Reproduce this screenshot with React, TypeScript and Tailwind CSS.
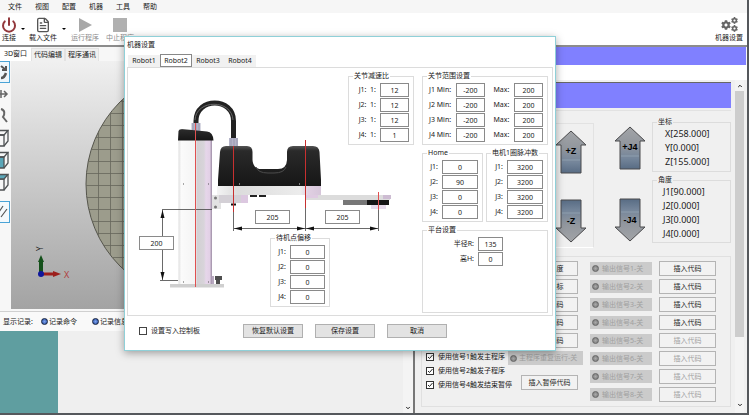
import type { ReactNode } from "react";
import { ChevronDown, ChevronUp, FileText, Power } from "lucide-react";
import { FaCog } from "react-icons/fa";

const menus = ["文件", "视图", "配置", "机器", "工具", "帮助"];
const joints = ["J1", "J2", "J3", "J4"];
const robots = ["Robot1", "Robot2", "Robot3", "Robot4"];
const captures = ["插入角度", "插入坐标", "插入代码", "插入代码", "插入代码"];
const triggers = [
  "使用信号1触发主程序",
  "使用信号2触发子程序",
  "使用信号4触发结束暂停",
];

function Group({
  title,
  className = "",
  children,
}: {
  title: string;
  className?: string;
  children?: ReactNode;
}) {
  return (
    <fieldset className={`border border-[#dcdcdc] min-w-0 ${className}`}>
      <legend className="ml-1 px-px leading-[10px]">{title}</legend>
      {children}
    </fieldset>
  );
}

function NumberBox({
  label,
  value,
  className,
}: {
  label: string;
  value: string;
  className: string;
}) {
  return (
    <input
      aria-label={label}
      defaultValue={value}
      className={`h-[14px] border border-[#8a8a8a] bg-white text-center leading-3 ${className}`}
    />
  );
}

function JointRows({
  name,
  prefix = "",
  values,
  box,
}: {
  name: string;
  prefix?: string;
  values: string[];
  box: string;
}) {
  return (
    <div className="flex flex-col gap-px pt-0.5 pb-0.5 pr-1">
      {joints.map((joint, i) => (
        <label key={joint} className="flex items-center justify-end gap-1">
          <span className="whitespace-pre">
            {joint}:{prefix}
          </span>
          <NumberBox label={`${name} ${joint}`} value={values[i]} className={box} />
        </label>
      ))}
    </div>
  );
}

function ToolButton({
  label,
  icon,
  disabled = false,
  className = "",
}: {
  label: string;
  icon: ReactNode;
  disabled?: boolean;
  className?: string;
}) {
  return (
    <button
      disabled={disabled}
      className={`flex flex-col items-center whitespace-nowrap leading-[10px] disabled:text-[#8c8c8c] ${className}`}
    >
      <span className="flex h-[17px] items-center">{icon}</span>
      {label}
    </button>
  );
}

function Caret() {
  return (
    <span className="block h-0 w-0 border-x-2 border-t-2 border-x-transparent border-t-black" />
  );
}

function JogArrow({ label, down = false }: { label: string; down?: boolean }) {
  return (
    <button aria-label={label} className="block">
      <svg width="32" height="44" viewBox="0 0 32 44">
        <defs>
          <linearGradient id={down ? "jogDown" : "jogUp"} x1="0" y1={down ? "1" : "0"} x2="0" y2={down ? "0" : "1"}>
            <stop offset="0" stopColor="#a2a4a7" />
            <stop offset="0.4" stopColor="#92979e" />
            <stop offset="0.75" stopColor="#74859a" />
            <stop offset="1" stopColor="#586c84" />
          </linearGradient>
        </defs>
        <path
          d={down ? "M6 1H26V29H31L16 43L1 29H6Z" : "M16 1L31 15H26V43H6V15H1Z"}
          fill={down ? "url(#jogDown)" : "url(#jogUp)"}
          stroke="#4a4a4c"
        />
        <path d={down ? "M7 14H25" : "M7 30H25"} stroke="#9aa9b8" strokeWidth="0.7" />
        <text
          x="16"
          y={down ? "25" : "24"}
          textAnchor="middle"
          className="font-['Liberation_Sans',sans-serif] text-[9px] font-bold"
        >
          {label}
        </text>
      </svg>
    </button>
  );
}

function Cube({ front = "none", top = "none" }: { front?: string; top?: string }) {
  return (
    <svg width="14" height="18" viewBox="0 0 14 18" fill="none" stroke="#4f5254" strokeWidth="1.3">
      <path d="M1 6H9V17H1Z" fill={front} />
      <path d="M1 6L5 1.500H13L9 6Z" fill={top} />
      <path d="M13 1.500V12L9 17" />
    </svg>
  );
}

function ViewTools() {
  const item = "flex h-[22px] w-4 items-center justify-center";
  return (
    <div className="w-[11px] shrink-0 overflow-hidden bg-[#f7f7f7]">
      <div className="-ml-1.5 flex flex-col">
        <button aria-label="旋转" className={`${item} border border-[#4aa3d6] bg-[#eef6fb]`}>
          <svg width="14" height="18" viewBox="0 0 14 18" fill="none" stroke="#555">
            <path d="M6 3L11 7M11 3V7H7" strokeWidth="2" />
            <path d="M6 15C9 15 10 13 11 10" strokeWidth="2.500" />
          </svg>
        </button>
        <button aria-label="平移" className={item}>
          <svg width="14" height="14" viewBox="0 0 14 14" fill="none" stroke="#666" strokeWidth="1.500">
            <path d="M5 7H12M9 4L12 7L9 10M6 3V11" />
          </svg>
        </button>
        <button aria-label="缩放" className={item}>
          <svg width="14" height="16" viewBox="0 0 14 16" fill="none" stroke="#666" strokeWidth="2">
            <path d="M6 1C10 2 10 6 8 9L12 14" />
          </svg>
        </button>
        <button aria-label="前视图" className={item}>
          <Cube />
        </button>
        <button aria-label="左视图" className={item}>
          <Cube front="#5aa6b8" />
        </button>
        <button aria-label="俯视图" className={item}>
          <Cube top="#5aa6b8" />
        </button>
        <button aria-label="测量" className={`${item} mt-2 border border-[#4aa3d6] bg-[#f4f9fc]`}>
          <svg width="14" height="18" viewBox="0 0 14 18" fill="none" stroke="#555" strokeWidth="1.200">
            <path d="M4 9L8 3M6 14L12 6" />
          </svg>
        </button>
      </div>
    </div>
  );
}

function Viewport() {
  const columns = [98, 110, 122, 134, 146, 158, 170, 182, 194, 206, 218, 230];
  const rows = [77, 89, 101, 113, 125, 137, 149, 161, 173, 185, 197, 209, 221, 233, 245, 257, 269, 281, 293];
  return (
    <div className="min-w-0 flex-1 overflow-hidden bg-linear-to-b from-[#f0f0f0] to-[#a3a3a3]">
      <svg width="392" height="248" viewBox="11 61 392 248">
        <defs>
          <clipPath id="plate">
            <circle cx="202" cy="184" r="116" />
          </clipPath>
        </defs>
        <circle cx="202" cy="184" r="116" fill="#9c9c8c" stroke="#55554c" />
        <g clipPath="url(#plate)" stroke="#66665c" strokeWidth="0.8">
          {columns.map((x) => (
            <path key={x} d={`M${x}.5 61V309`} />
          ))}
          {rows.map((y) => (
            <path key={y} d={`M80 ${y}.5H330`} />
          ))}
        </g>
        <path d="M41 273V261" stroke="#14501a" strokeWidth="4" />
        <path d="M38 262L41 255L44 262Z" fill="#14501a" />
        <path d="M43 274H54" stroke="#9c1f1c" strokeWidth="3" />
        <path d="M53 271L61 274L53 277Z" fill="#9c1f1c" />
        <circle cx="41" cy="274" r="3" fill="#10189c" />
        <text x="64" y="278" fill="#b04040" className="text-[9px]">
          X
        </text>
        <text transform="translate(43 251) rotate(-90)" fill="#222" className="text-[8px]">
          Y
        </text>
      </svg>
    </div>
  );
}

function RobotDrawing() {
  return (
    <svg className="absolute inset-0" width="290" height="247" viewBox="128 68 290 247" fill="none">
      <defs>
        <linearGradient id="column" x1="0" x2="1" y1="0" y2="0">
          <stop offset="0" stopColor="#dedede" />
          <stop offset="0.08" stopColor="#fbfbfb" />
          <stop offset="0.5" stopColor="#f4f4f4" />
          <stop offset="0.56" stopColor="#d2d0d3" />
          <stop offset="0.76" stopColor="#d8d4da" />
          <stop offset="0.82" stopColor="#e6d6ea" />
          <stop offset="0.93" stopColor="#e2d0e6" />
          <stop offset="1" stopColor="#9c8ca4" />
        </linearGradient>
        <linearGradient id="band" x1="0" x2="1" y1="0" y2="0">
          <stop offset="0" stopColor="#f4f4f4" />
          <stop offset="0.2" stopColor="#dcdcdc" />
          <stop offset="0.8" stopColor="#ececec" />
          <stop offset="0.88" stopColor="#e0cfe2" />
          <stop offset="1" stopColor="#d6c6da" />
        </linearGradient>
        <linearGradient id="cover" x1="0" x2="0" y1="0" y2="1">
          <stop offset="0" stopColor="#555" />
          <stop offset="0.12" stopColor="#2a2a2a" />
          <stop offset="1" stopColor="#161616" />
        </linearGradient>
      </defs>

      {/* hose */}
      <path d="M196 125V121C196 97 233.500 97 233.500 121V140" stroke="#222" strokeWidth="5" />
      <path d="M195 120C196 99 232 99 233 120" stroke="#666" strokeWidth="1" />
      <path d="M191.500 123H200.500V131H191.500ZM229 138H238V146H229Z" fill="#b4b4c8" />
      <path d="M193 123V131M196 123V131M199 123V131M231 138V146M234 138V146M237 138V146" stroke="#8a8aa6" strokeWidth="0.6" />

      {/* column and base */}
      <path d="M178.500 140V284H212V140Z" fill="url(#column)" />
      <path d="M178 140.500L178.500 131Q179 129 182 129L207 131.500Q213 132 213.500 140.500Z" fill="url(#cover)" />
      <path d="M212 276H214V284H212Z" fill="#b8a8c0" />
      <path d="M215 276H222V280H220V284H216V280H215Z" fill="#4e4e4e" />
      <path d="M170 284H224V287.500H170Z" fill="#cfcfcf" />
      <path d="M183 184H184M208 184H209M183 282H184M208 282H209" stroke="#555" />

      {/* arm */}
      <path d="M212 195H221V209H212Z" fill="#e2e2e2" />
      <circle cx="215.500" cy="198" r="1.500" fill="#777" />
      <circle cx="215.500" cy="207" r="1.500" fill="#777" />
      <path d="M219 195H248V203H219Z" fill="#d4d0d6" />
      <path d="M241 195H248V203H241Z" fill="#dcc8e0" />
      <path d="M217 186H321V195H217Z" fill="url(#band)" />
      <path d="M305 195H390V200H305Z" fill="#dcdcdc" />
      <path d="M305 195H318V198H305Z" fill="#dfcbe2" />
      <path d="M383 195H391V199H383Z" fill="#cdbcd2" />
      <path d="M343 200H368V205H343Z" fill="#777" />
      <path d="M367 200H389V205H367Z" fill="#161616" />
      <path d="M371 205H386V209H371Z" fill="#e8dcec" />
      <path d="M250 196H257M259 196H266" stroke="#222" strokeWidth="2" />
      <path d="M231 204.500H236" stroke="#111" strokeWidth="2" />
      <path
        d="M218 186V180L220 152Q220.500 146 226 146H247Q252.500 146 252.500 152V160Q253 169 262 169H278Q286.500 169 287 160V152Q287 146 293 146H313Q319 146 319.500 152L321 180V186Z"
        fill="url(#cover)"
      />
      <path d="M256 167Q258 173 268 173H274Q284 173 286 167" stroke="#4c4c4c" />
      <path d="M239 184H240M299 184H300" stroke="#ddd" />

      {/* dimensions */}
      <g stroke="#444" strokeWidth="0.8">
        <path d="M162 209.500H212M160 280.500H178M162.500 210V280" />
        <path d="M233.500 212V231M305.500 208V231M378.500 208V231M234 228.500H378" />
      </g>
      <path
        d="M162.500 210L160.500 218H164.500ZM162.500 280L160.500 272H164.500ZM234 228.500L242 226.500V230.500ZM305 228.500L297 226.500V230.500ZM306 228.500L314 226.500V230.500ZM378 228.500L370 226.500V230.500Z"
        fill="#111"
      />

      {/* joint axes */}
      <path d="M195.500 123V287" stroke="#e05050" />
      <path d="M233.500 146V212" stroke="#c83030" />
      <path d="M305.500 140V208" stroke="#c83030" />
      <path d="M378.500 192V210" stroke="#e05050" />
    </svg>
  );
}

function SettingsDialog() {
  const button = "h-[14px] w-[60px] border border-[#b0b0b0] bg-[#e3e3e3] leading-3";
  return (
    <div
      role="dialog"
      aria-label="机器设置"
      className="absolute top-9 left-[124px] flex w-[432px] flex-col border border-[#8fd0d8] bg-white px-0.5 shadow-[0_2px_8px_rgba(0,0,0,0.35)]"
    >
      <h2 className="h-[17px] leading-[15px]">机器设置</h2>
      <div role="tablist" className="flex h-[13px] items-end px-px">
        {robots.map((robot) => (
          <button
            key={robot}
            role="tab"
            aria-selected={robot === "Robot2"}
            className="h-3 w-8 bg-[#f1f1f1] leading-3 aria-selected:h-[13px] aria-selected:border aria-selected:border-[#888] aria-selected:bg-white"
          >
            {robot}
          </button>
        ))}
      </div>

      <div className="flex justify-between border border-[#dcdcdc] pr-1">
        <div className="relative flex w-[290px] flex-col items-end justify-between pt-[3px] pr-1 pb-2">
          <RobotDrawing />
          <Group title="关节减速比" className="relative w-[66px]">
            <JointRows name="减速比" prefix="  1:" values={["12", "12", "12", "1"]} box="w-[29px]" />
          </Group>
          <Group title="待机点偏移" className="relative mr-[84px] w-[60px]">
            <JointRows name="待机点偏移" values={["0", "0", "0", "0"]} box="w-[35px]" />
          </Group>
          <NumberBox label="立柱高度" value="200" className="absolute top-[168px] left-[11px] w-[35px]" />
          <NumberBox label="大臂长度" value="205" className="absolute top-[142px] left-[127px] w-[35px]" />
          <NumberBox label="小臂长度" value="205" className="absolute top-[142px] left-[197px] w-[35px]" />
        </div>

        <div className="flex w-[126px] flex-col gap-[3px] pt-[3px] pb-0.5">
          <Group title="关节范围设置">
            <div className="flex flex-col gap-px pt-0.5 pr-1 pb-0.5 pl-1.5">
              {joints.map((joint) => (
                <div key={joint} className="flex items-center justify-between">
                  <span>{joint} Min:</span>
                  <NumberBox label={`${joint} Min`} value="-200" className="w-[29px]" />
                  <span className="pl-1">Max:</span>
                  <NumberBox label={`${joint} Max`} value="200" className="w-[29px]" />
                </div>
              ))}
            </div>
          </Group>
          <div className="flex justify-between">
            <Group title="Home" className="w-[61px]">
              <JointRows name="Home" values={["0", "90", "0", "0"]} box="w-9" />
            </Group>
            <Group title="电机1圈脉冲数" className="w-[62px]">
              <JointRows name="脉冲数" values={["3200", "3200", "3200", "3200"]} box="w-9" />
            </Group>
          </div>
          <Group title="平台设置" className="min-h-[88px]">
            <div className="flex flex-col gap-px pt-0.5 pr-11">
              <label className="flex items-center justify-end gap-1">
                半径R:
                <NumberBox label="半径R" value="135" className="w-[25px]" />
              </label>
              <label className="flex items-center justify-end gap-1">
                高H:
                <NumberBox label="高H" value="0" className="w-[25px]" />
              </label>
            </div>
          </Group>
        </div>
      </div>

      <div className="flex h-[34px] items-center pb-1 pl-3">
        <label className="flex w-[104px] items-center gap-1">
          <input type="checkbox" className="h-2 w-2 appearance-none border border-[#444] bg-white" />
          设置写入控制板
        </label>
        <div className="flex gap-3">
          <button className={button}>恢复默认设置</button>
          <button className={button}>保存设置</button>
          <button className={button}>取消</button>
        </div>
      </div>
    </div>
  );
}

function Lamp() {
  return (
    <span className="h-[7px] w-[7px] shrink-0 rounded-full border border-[#666] bg-radial from-[#aaa] to-[#777]" />
  );
}

function LogOption({ label }: { label: string }) {
  return (
    <button className="flex items-center gap-px">
      <span className="h-[7px] w-[7px] rounded-full border border-[#14203c] bg-radial from-[#7fa4ee] to-[#2348a0]" />
      {label}
    </button>
  );
}

function LeftPane() {
  return (
    <div className="flex min-w-0 flex-col border-r-2 border-[#777]">
      <div role="tablist" className="flex h-3.5 shrink-0 items-end bg-[#f7f7f7] leading-3">
        <button role="tab" aria-selected="true" className="h-3.5 w-[31px] bg-white text-center">
          3D窗口
        </button>
        <button role="tab" aria-selected="false" className="w-[34px] border border-b-0 border-[#e2e2e2] bg-[#f0f0f0] text-center">
          代码编辑
        </button>
        <button role="tab" aria-selected="false" className="w-[34px] border border-b-0 border-[#e2e2e2] bg-[#f0f0f0] text-center">
          程序通讯
        </button>
      </div>
      <div className="flex h-[248px] shrink-0">
        <ViewTools />
        <Viewport />
      </div>
      <div className="mt-0.5 flex h-5 shrink-0 items-center border-t border-[#d0d0d0] bg-[#f9f9f9] pl-[3px]">
        <span className="w-[38px]">显示记录:</span>
        <span className="w-[51px]">
          <LogOption label="记录命令" />
        </span>
        <LogOption label="记录信息" />
      </div>
      <div className="flex min-h-0 flex-1 bg-[#efefef]">
        <div className="w-[58px] bg-[#5f9ea0]" />
        <div className="ml-auto flex w-2.5 items-end justify-center bg-[#f4f4f4] pb-0.5">
          <ChevronDown size={6} strokeWidth={4} />
        </div>
      </div>
    </div>
  );
}

function SignalPanel() {
  const button = "h-[15px] w-[57px] border border-[#b4b4b4] bg-[#f2f2f2] leading-3 disabled:text-[#a0a0a0]";
  return (
    <div className="flex justify-end gap-[7px] border border-[#e0e0e0] py-1 pr-3.5">
      <div className="flex flex-1 flex-col gap-[3px] pl-1">
        {captures.map((label, i) => (
          <button key={i} className={`${button} ml-auto mr-[5px]`}>
            {label}
          </button>
        ))}
        <div className="flex items-start justify-between">
          <div className="flex flex-col gap-1 whitespace-nowrap pt-px">
            {triggers.map((label) => (
              <label key={label} className="flex h-2.5 items-center gap-1">
                <input
                  type="checkbox"
                  defaultChecked
                  className="h-2 w-2 appearance-none border border-[#333] bg-white"
                />
                <svg className="-ml-3 h-2 w-2" viewBox="0 0 8 8" fill="none" stroke="#222">
                  <path d="M2 4L3.500 5.500L6.500 2" />
                </svg>
                {label}
              </label>
            ))}
          </div>
          <div className="-ml-4 flex flex-col items-end gap-2.5">
            <button disabled className="flex h-[14px] w-[75px] items-center gap-0.5 whitespace-nowrap bg-[#cbcbcb] pl-0.5 text-[#a0a0a0]">
              <Lamp />
              主程序重复运行-关
            </button>
            <button className={`${button} mr-[5px]`}>插入暂停代码</button>
          </div>
        </div>
      </div>
      <div className="flex flex-col gap-[3px]">
        {[1, 2, 3, 4, 5, 6, 7, 8].map((n) => (
          <div key={n} className="flex gap-[7px]">
            <button disabled className="flex h-[15px] w-[62px] items-center gap-[3px] whitespace-nowrap border-y border-[#f0f0f0] bg-[#cbcbcb] pl-0.5 text-[#a0a0a0]">
              <Lamp />
              输出信号{n}-关
            </button>
            <button disabled={n > 4} className={button}>
              插入代码
            </button>
          </div>
        ))}
      </div>
    </div>
  );
}

function RightPane() {
  return (
    <div className="flex min-w-0 flex-col">
      <div className="mr-px h-[18px] shrink-0 bg-[#8080ff]" />
      <div className="h-[15px] shrink-0 bg-white" />
      <div className="flex min-h-0 flex-1 bg-[#f0f0f0]">
        <div className="flex min-w-0 flex-1 flex-col pt-0.5 pl-1.5">
          <div className="mr-1 h-[26px] shrink-0 border-t border-[#666] bg-[#8080ff]" />
          <div className="mt-0.5 mr-1 flex flex-col gap-2 border-t border-[#e2e2e2] pt-1.5">
            <div className="flex justify-end gap-5">
              <div className="mt-1.5 flex flex-1 flex-col items-end justify-between border border-[#e2e2e2] border-b-white pt-1.5 pr-1.5 pb-1">
                <JogArrow label="+Z" />
                <JogArrow label="-Z" down />
              </div>
              <div className="flex flex-col justify-between pt-[9px] pb-1.5">
                <JogArrow label="+J4" />
                <JogArrow label="-J4" down />
              </div>
              <div className="-ml-3.5 flex w-[79px] flex-col gap-[3px] pb-[5px]">
                <Group title="坐标">
                  <div className="flex flex-col pb-0.5 pl-3 text-[9px] leading-[14px]">
                    <span>X[258.000]</span>
                    <span>Y[0.000]</span>
                    <span>Z[155.000]</span>
                  </div>
                </Group>
                <Group title="角度">
                  <div className="flex flex-col pb-px pl-2.5 text-[9px] leading-[14px]">
                    <span>J1[90.000]</span>
                    <span>J2[0.000]</span>
                    <span>J3[0.000]</span>
                    <span>J4[0.000]</span>
                  </div>
                </Group>
              </div>
            </div>
            <SignalPanel />
          </div>
        </div>
        <div className="mr-[3px] flex w-[9px] flex-col items-center bg-[#f4f4f4] pt-[3px] pb-[5px]">
          <ChevronUp size={6} strokeWidth={4} />
          <div className="mt-0.5 h-[246px] w-full bg-[#cdcdcd]" />
          <ChevronDown size={6} strokeWidth={4} className="mt-auto" />
        </div>
      </div>
    </div>
  );
}

export default function App() {
  return (
    <div className="relative flex h-screen flex-col overflow-hidden bg-[#55585c] pr-0.5 pb-0.5 font-['Noto_Sans','Noto_Sans_CJK_SC',sans-serif] text-[7px] leading-[10px] text-[#1a1a1a]">
      <nav className="flex h-[13px] shrink-0 items-center gap-[13px] bg-[#f6f6f6] pl-2">
        {menus.map((menu) => (
          <button key={menu}>{menu}</button>
        ))}
      </nav>
      <header className="flex h-[34px] shrink-0 items-start border-b-2 border-[#8c8c8c] bg-white pt-[3px] pr-1 pl-px">
        <ToolButton label="连接" icon={<Power size={16} strokeWidth={3} color="#93383c" />} />
        <span className="px-1 pt-3">
          <Caret />
        </span>
        <ToolButton label="载入文件" icon={<FileText size={16} strokeWidth={2} color="#555" />} />
        <span className="px-[5px] pt-3">
          <Caret />
        </span>
        <ToolButton
          disabled
          label="运行程序"
          icon={
            <svg width="14" height="14" viewBox="0 0 14 14">
              <path d="M1 0L14 7L1 14Z" fill="#a8a8a8" />
            </svg>
          }
        />
        <ToolButton disabled label="中止程序" className="ml-[7px]" icon={<span className="h-3.5 w-3.5 bg-[#b0b0b0]" />} />
        <ToolButton
          label="机器设置"
          className="ml-auto"
          icon={
            <span className="flex items-center text-[#666]">
              <FaCog size={10} />
              <span className="flex flex-col gap-px">
                <FaCog size={7} />
                <FaCog size={7} />
              </span>
            </span>
          }
        />
      </header>
      <main className="grid min-h-0 flex-1 grid-cols-[minmax(0,5fr)_minmax(0,4fr)] bg-[#f7f7f7]">
        <LeftPane />
        <RightPane />
      </main>
      <SettingsDialog />
    </div>
  );
}
